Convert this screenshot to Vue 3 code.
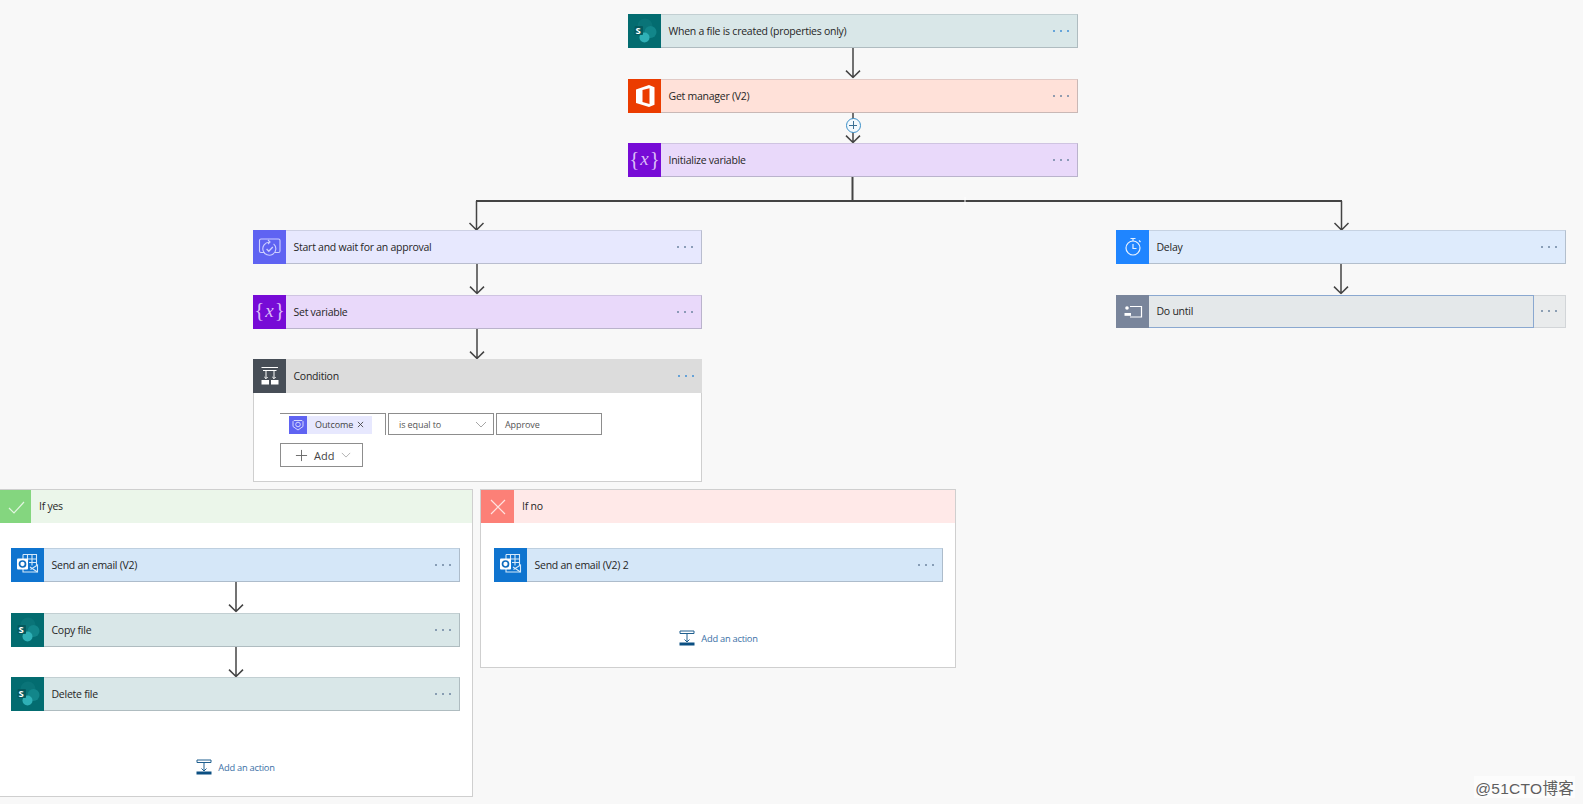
<script setup>
const topCards = [
  { kind: 'sp', icon: 'ic-sp', title: 'When a file is created (properties only)', blue: true },
  { kind: 'office', icon: 'ic-office', title: 'Get manager (V2)' },
  { kind: 'var', title: 'Initialize variable' }
]
const leftCards = [
  { kind: 'approval', icon: 'ic-approval', title: 'Start and wait for an approval' },
  { kind: 'var', title: 'Set variable' }
]
const yesCards = [
  { kind: 'mail', icon: 'ic-mail', title: 'Send an email (V2)' },
  { kind: 'sp', icon: 'ic-sp', title: 'Copy file' },
  { kind: 'sp', icon: 'ic-sp', title: 'Delete file' }
]
const noCards = [{ kind: 'mail', icon: 'ic-mail', title: 'Send an email (V2) 2' }]
</script>

<template>
  <div class="canvas">
    <svg class="defs" width="0" height="0" aria-hidden="true">
      <symbol id="ic-sp" viewBox="0 0 33 34">
        <circle cx="17" cy="12" r="7.5" fill="#0a7478" />
        <circle cx="22.5" cy="18" r="6" fill="#12868a" />
        <circle cx="16.5" cy="23.5" r="5" fill="#2fb0b6" />
        <rect x="6.5" y="12" width="8.5" height="9" rx="1" fill="#045a5e" />
      </symbol>
      <symbol id="ic-office" viewBox="0 0 33 34">
        <path fill-rule="evenodd" fill="#fff" d="M8 10.5 21 6l5.5 2.2v17.6L21 28 8 24ZM21.5 9.2 14.5 11v12l7 2Z" />
      </symbol>
      <symbol id="ic-approval" viewBox="0 0 33 34">
        <g fill="none" stroke="#cdd0ff" stroke-width="1.1">
          <path d="M11.5 22.5H8a1.5 1.5 0 0 1-1.5-1.5V10.500A1.500 1.500 0 0 1 8 9h17.500A1.500 1.500 0 0 1 27 10.500V21a1.500 1.500 0 0 1-1.500 1.500H22" />
          <path d="M20.600 13.800a6.500 6.500 0 1 1-4.300-1.600" />
          <path d="M15 10l2 2-2 2" />
          <path d="m13.600 19 2.200 2.200 4-4.200" stroke-width="1.300" />
        </g>
      </symbol>
      <symbol id="ic-cond" viewBox="0 0 33 34">
        <g fill="none" stroke="#fff" stroke-width="1">
          <path d="M8.500 8.500h16.500M10 11.500h13.500M13 11.500v8M21 11.500v8" />
          <path d="m11.300 18 1.700 1.700 1.700-1.700M19.300 18l1.700 1.700 1.700-1.700" />
        </g>
        <rect x="8.500" y="21" width="7.500" height="4.500" fill="#fff" />
        <rect x="18" y="21" width="7.500" height="4.500" fill="#fff" />
      </symbol>
      <symbol id="ic-mail" viewBox="0 0 33 34">
        <g fill="none" stroke="#d6e9fa" stroke-width="1.100">
          <path d="M12 6.500h13.500v11M12 6.500v5M16.500 6.500v5M21 6.500v11M16 11h9.500M18 14.500h7.500" />
          <path d="M12 17.500v6.500h14.500V17l-7 4.500" />
          <path d="m19 19 7.500 5" />
        </g>
        <rect x="6" y="10.500" width="11" height="11" rx="1" fill="#fff" />
        <circle cx="11.500" cy="16" r="3" fill="none" stroke="#0f6cbd" stroke-width="1.700" />
      </symbol>
      <symbol id="ic-delay" viewBox="0 0 33 34">
        <g fill="none" stroke="#e6f1ff" stroke-width="1.200">
          <circle cx="17" cy="18" r="7" />
          <path d="M14.500 8.500h5M17 8.500V11M17 14v4.500h3.500M23 10.500l1.500 1.500" />
        </g>
      </symbol>
      <symbol id="ic-until" viewBox="0 0 33 33">
        <path d="M14 11.500h11.500v10.500H14" fill="none" stroke="#fff" stroke-width="1.200" />
        <circle cx="11" cy="13" r="1.800" fill="#fff" />
        <rect x="8.500" y="18" width="6.500" height="2.800" fill="#fff" />
      </symbol>
      <symbol id="ic-add" viewBox="0 0 16 16">
        <path d="M1 1h14v2.500H1ZM8 3.500V12M5.500 9.500 8 12l2.500-2.500" fill="none" stroke="#1f5f8f" stroke-width="1" />
        <rect x="0.500" y="12.500" width="15" height="3" fill="#0b4f82" />
      </symbol>
      <symbol id="arrow" viewBox="0 0 16 31" preserveAspectRatio="none">
        <path d="M8 0v29.500M1 23l7 7 7-7" fill="none" stroke="#444" stroke-width="1.500" />
      </symbol>
    </svg>

    <div class="stack top">
      <template v-for="(c, i) in topCards" :key="c.title">
        <div v-if="i" class="conn">
          <svg><use href="#arrow" /></svg>
          <span v-if="i === 2" class="plus" />
        </div>
        <div class="card" :class="c.kind">
          <span class="tile">
            <svg v-if="c.icon"><use :href="'#' + c.icon" /></svg>
            <b v-if="c.kind === 'sp'" class="sp-s">S</b>
            <span v-if="c.kind === 'var'" class="vx">{<i>x</i>}</span>
          </span>
          <span class="title">{{ c.title }}</span>
          <span class="dots" :class="{ blue: c.blue }"><i /><i /><i /></span>
        </div>
      </template>
    </div>

    <svg class="branch" width="1583" height="53" viewBox="0 0 1583 53">
      <g fill="none" stroke="#444">
        <path d="M852.500 0v24" stroke-width="2" />
        <path d="M476 24h866" stroke-width="2" />
        <path d="M476.500 24v29M469.500 46l7 7 7-7M1341.500 24v29M1334.500 46l7 7 7-7" stroke-width="1.500" />
      </g>
      <path d="M965 20v8" stroke="#fff" stroke-width="1" />
    </svg>

    <div class="split">
      <div class="col-left">
        <div class="stack flow-left">
          <template v-for="c in leftCards" :key="c.title">
            <div class="card" :class="c.kind">
              <span class="tile">
                <svg v-if="c.icon"><use :href="'#' + c.icon" /></svg>
                <span v-if="c.kind === 'var'" class="vx">{<i>x</i>}</span>
              </span>
              <span class="title">{{ c.title }}</span>
              <span class="dots"><i /><i /><i /></span>
            </div>
            <div class="conn"><svg><use href="#arrow" /></svg></div>
          </template>

          <div class="cond">
            <div class="card condhead">
              <span class="tile"><svg><use href="#ic-cond" /></svg></span>
              <span class="title">Condition</span>
              <span class="dots blue"><i /><i /><i /></span>
            </div>
            <div class="cond-body">
              <div class="fields">
                <div class="field first">
                  <span class="chip">
                    <svg class="chip-ic" viewBox="0 0 18 18">
                      <path d="M5 4.500h8l1 1v5l-5 3.500-5-3.500v-5Z" fill="none" stroke="#d5d7ff" stroke-width="1" />
                      <circle cx="9" cy="8.500" r="2.300" fill="none" stroke="#d5d7ff" stroke-width="1" />
                    </svg>
                    <span class="chip-text">Outcome</span>
                    <svg class="chip-x" viewBox="0 0 8 8"><path d="m1 1 6 6M7 1 1 7" stroke="#444" stroke-width="1" /></svg>
                  </span>
                </div>
                <div class="field op">
                  <span>is equal to</span>
                  <svg class="chev" viewBox="0 0 12 7"><path d="m1 1 5 5 5-5" fill="none" stroke="#a6a6a6" stroke-width="1" /></svg>
                </div>
                <div class="field val">Approve</div>
              </div>
              <div class="addbtn">
                <svg class="addplus" viewBox="0 0 14 14"><path d="M7 1v12M1 7h12" stroke="#666" stroke-width="1" /></svg>
                <span>Add</span>
                <svg class="addchev" viewBox="0 0 12 7"><path d="m1 1 5 5 5-5" fill="none" stroke="#a6a6a6" stroke-width="1" /></svg>
              </div>
            </div>
          </div>
        </div>

        <div class="outcomes">
          <section class="scope yes">
            <header class="scope-head">
              <span class="scope-tile">
                <svg viewBox="0 0 20 20" width="20" height="20"><path d="m3 11 5 5L18 5" fill="none" stroke="#e3f6e1" stroke-width="1.200" /></svg>
              </span>
              <span class="scope-title">If yes</span>
            </header>
            <div class="scope-body">
              <template v-for="(c, i) in yesCards" :key="c.title">
                <div v-if="i" class="conn"><svg><use href="#arrow" /></svg></div>
                <div class="card" :class="c.kind">
                  <span class="tile">
                    <svg><use :href="'#' + c.icon" /></svg>
                    <b v-if="c.kind === 'sp'" class="sp-s">S</b>
                  </span>
                  <span class="title">{{ c.title }}</span>
                  <span class="dots"><i /><i /><i /></span>
                </div>
              </template>
              <div class="add-action">
                <svg><use href="#ic-add" /></svg>
                <span>Add an action</span>
              </div>
            </div>
          </section>

          <section class="scope no">
            <header class="scope-head">
              <span class="scope-tile">
                <svg viewBox="0 0 20 20" width="20" height="20"><path d="m3 3 14 14M17 3 3 17" fill="none" stroke="#ffe3e0" stroke-width="1.200" /></svg>
              </span>
              <span class="scope-title">If no</span>
            </header>
            <div class="scope-body">
              <div v-for="c in noCards" :key="c.title" class="card" :class="c.kind">
                <span class="tile"><svg><use :href="'#' + c.icon" /></svg></span>
                <span class="title">{{ c.title }}</span>
                <span class="dots"><i /><i /><i /></span>
              </div>
              <div class="add-action">
                <svg><use href="#ic-add" /></svg>
                <span>Add an action</span>
              </div>
            </div>
          </section>
        </div>
      </div>

      <div class="stack col-right">
        <div class="card delay">
          <span class="tile"><svg><use href="#ic-delay" /></svg></span>
          <span class="title">Delay</span>
          <span class="dots"><i /><i /><i /></span>
        </div>
        <div class="conn"><svg><use href="#arrow" /></svg></div>
        <div class="until-wrap">
          <div class="card until">
            <span class="tile"><svg><use href="#ic-until" /></svg></span>
            <span class="title">Do until</span>
          </div>
          <div class="until-tail">
            <span class="dots"><i /><i /><i /></span>
          </div>
        </div>
      </div>
    </div>

    <div class="watermark">@51CTO博客</div>
  </div>
</template>

<style scoped>
.canvas {
  position: relative;
  width: 1583px;
  height: 804px;
  overflow: hidden;
  box-sizing: border-box;
  padding-top: 14px;
  background: #f8f8f8;
  font-family: "Open Sans", "Noto Sans", sans-serif;
  color: #333;
}
.defs {
  position: absolute;
}
.stack {
  display: flex;
  flex-direction: column;
  width: 450px;
}
.top {
  margin-left: 628px;
}
.branch {
  display: block;
}
.split {
  display: flex;
  align-items: flex-start;
}
.col-left {
  width: 956px;
  flex: none;
}
.flow-left {
  margin-left: 253px;
  width: 449px;
}
.flow-left > .conn {
  padding-right: 2px;
}
.col-right {
  margin-left: 160px;
  width: 450px;
  flex: none;
}

.card {
  display: flex;
  align-items: center;
  box-sizing: border-box;
  height: 34px;
  flex: none;
  border: 1px solid rgba(90, 100, 110, 0.32);
  border-top-color: rgba(90, 100, 110, 0.18);
  border-left: none;
}
.tile {
  position: relative;
  display: block;
  width: 33px;
  height: 34px;
  margin-top: -1px;
  margin-bottom: -1px;
  flex: none;
}
.tile svg {
  display: block;
  width: 33px;
  height: 100%;
}
.sp-s {
  position: absolute;
  left: 7.5px;
  top: 10px;
  font-size: 9.5px;
  line-height: 13px;
  color: #fff;
}
.vx {
  position: absolute;
  inset: 0;
  display: flex;
  align-items: center;
  justify-content: center;
  padding-bottom: 2px;
  font-family: "Liberation Serif", serif;
  font-size: 21px;
  color: #dcbdf8;
}
.vx i {
  font-size: 19px;
  margin: 0 1px;
}
.title {
  margin-left: 7.5px;
  font-size: 10.5px;
  letter-spacing: -0.25px;
  white-space: nowrap;
  color: #262626;
}
.dots {
  display: flex;
  gap: 5px;
  margin-left: auto;
  margin-right: 8px;
}
.dots i {
  width: 2px;
  height: 2px;
  background: #6d84a0;
  border-radius: 50%;
}
.dots.blue i {
  background: #3f8fd6;
}

.sp { background: #d9e7e8; }
.sp .tile { background: #036c70; }
.office { background: #ffe1d9; }
.office .tile { background: #eb3c00; }
.var { background: #e9d9fa; }
.var .tile { background: #770bd6; }
.approval { background: #e7e8fe; }
.approval .tile { background: #5f63f2; }
.mail { background: #d5e7f8; }
.mail .tile { background: #0f74cf; }
.delay { background: #deebfc; }
.delay .tile { background: #1f85ff; }

.conn {
  position: relative;
  display: flex;
  justify-content: center;
  height: 30.5px;
  flex: none;
}
.conn svg {
  width: 16px;
  height: 30.5px;
  display: block;
}
.plus {
  position: absolute;
  left: 50%;
  top: 5px;
  box-sizing: border-box;
  width: 15px;
  height: 15px;
  margin-left: -7.5px;
  border: 1px solid #3a8fc8;
  border-radius: 50%;
  background:
    linear-gradient(#3a6f94, #3a6f94) center / 8px 1px no-repeat,
    linear-gradient(#3a6f94, #3a6f94) center / 1px 8px no-repeat,
    #f3f9fd;
}

.cond {
  box-sizing: border-box;
  height: 123px;
  background: #fff;
  border: 1px solid #cfcfcf;
  flex: none;
}
.condhead {
  background: #dcdcdc;
  border: none;
  margin: -1px -1px 0;
}
.condhead .tile {
  background: #474e57;
  margin: 0;
}
.cond-body {
  padding: 20px 0 0 26px;
}
.fields {
  display: flex;
  gap: 2px;
  height: 22px;
  font-size: 9px;
  letter-spacing: -0.1px;
  color: #555;
}
.field {
  box-sizing: border-box;
  width: 106px;
  border: 1px solid #8d8d8d;
  display: flex;
  align-items: center;
}
.field.first {
  border-left: none;
  border-bottom: none;
  padding-left: 9px;
}
.field.op {
  padding-left: 10px;
  padding-right: 6px;
  justify-content: space-between;
}
.field.val {
  padding-left: 8px;
}
.chip {
  display: flex;
  align-items: center;
  height: 18px;
  width: 83px;
  flex: none;
  background: #e7e8fe;
}
.chip-ic {
  width: 18px;
  height: 18px;
  background: #5f63f2;
  flex: none;
}
.chip-text {
  margin-left: 8px;
  color: #444;
}
.chip-x {
  width: 7px;
  height: 7px;
  margin-left: 4px;
}
.chev {
  width: 12px;
  height: 7px;
}
.addbtn {
  box-sizing: border-box;
  display: flex;
  align-items: center;
  width: 83px;
  height: 24px;
  margin-top: 8px;
  border: 1px solid #8d8d8d;
  background: #fff;
  font-size: 11px;
  color: #444;
}
.addplus {
  width: 13px;
  height: 13px;
  margin-left: 14px;
}
.addbtn span {
  margin-left: 6px;
}
.addchev {
  width: 10px;
  height: 6px;
  margin-left: 7px;
}

.outcomes {
  display: flex;
  align-items: flex-start;
  gap: 7px;
  margin-top: 7px;
}
.scope {
  box-sizing: border-box;
  background: #fff;
  border: 1px solid #cfcfcf;
  flex: none;
}
.scope.yes {
  width: 473px;
  height: 308px;
  border-left: none;
}
.scope.no {
  width: 476px;
  height: 179px;
}
.scope-head {
  display: flex;
  align-items: center;
  height: 33px;
  padding-bottom: 1px;
  box-sizing: border-box;
}
.scope-tile {
  display: flex;
  align-items: center;
  justify-content: center;
  height: 33px;
  margin-bottom: -1px;
  flex: none;
}
.yes .scope-head { background: #ebf6ea; }
.yes .scope-tile { width: 31px; background: #84d67f; }
.no .scope-head { background: #ffe9e8; }
.no .scope-tile { width: 33px; background: #fc8077; }
.scope-title {
  margin-left: 8px;
  font-size: 10.5px;
  letter-spacing: -0.25px;
  color: #262626;
}
.scope-body {
  display: flex;
  flex-direction: column;
  padding: 25px 0 0 11px;
}
.no .scope-body {
  padding-left: 13px;
}
.scope-body .card,
.scope-body .conn,
.scope-body .add-action {
  width: 449px;
}
.add-action {
  display: flex;
  align-items: center;
  justify-content: center;
  gap: 6px;
  height: 16px;
  margin-top: 48px;
  font-size: 9.3px;
  letter-spacing: -0.25px;
  color: #3b6fa6;
}
.add-action svg {
  width: 16px;
  height: 16px;
}

.until-wrap {
  display: flex;
  height: 33px;
}
.until {
  width: 418px;
  height: 33px;
  background: #e4e8ea;
  border: 1px solid #8aa8d0;
  border-left: none;
  flex: none;
}
.until .tile {
  background: #79859b;
  height: 33px;
}
.until-tail {
  flex: 1;
  display: flex;
  align-items: center;
  box-sizing: border-box;
  background: #e9ebec;
  border: 1px solid #d2d5d8;
  border-left: none;
}

.watermark {
  position: absolute;
  right: 8px;
  bottom: 6px;
  padding: 0 1px;
  background: rgba(255, 255, 255, 0.6);
  font-family: "Liberation Sans", "Noto Sans CJK SC", sans-serif;
  font-size: 15.5px;
  letter-spacing: 0.3px;
  color: #5f5f5f;
}
</style>
